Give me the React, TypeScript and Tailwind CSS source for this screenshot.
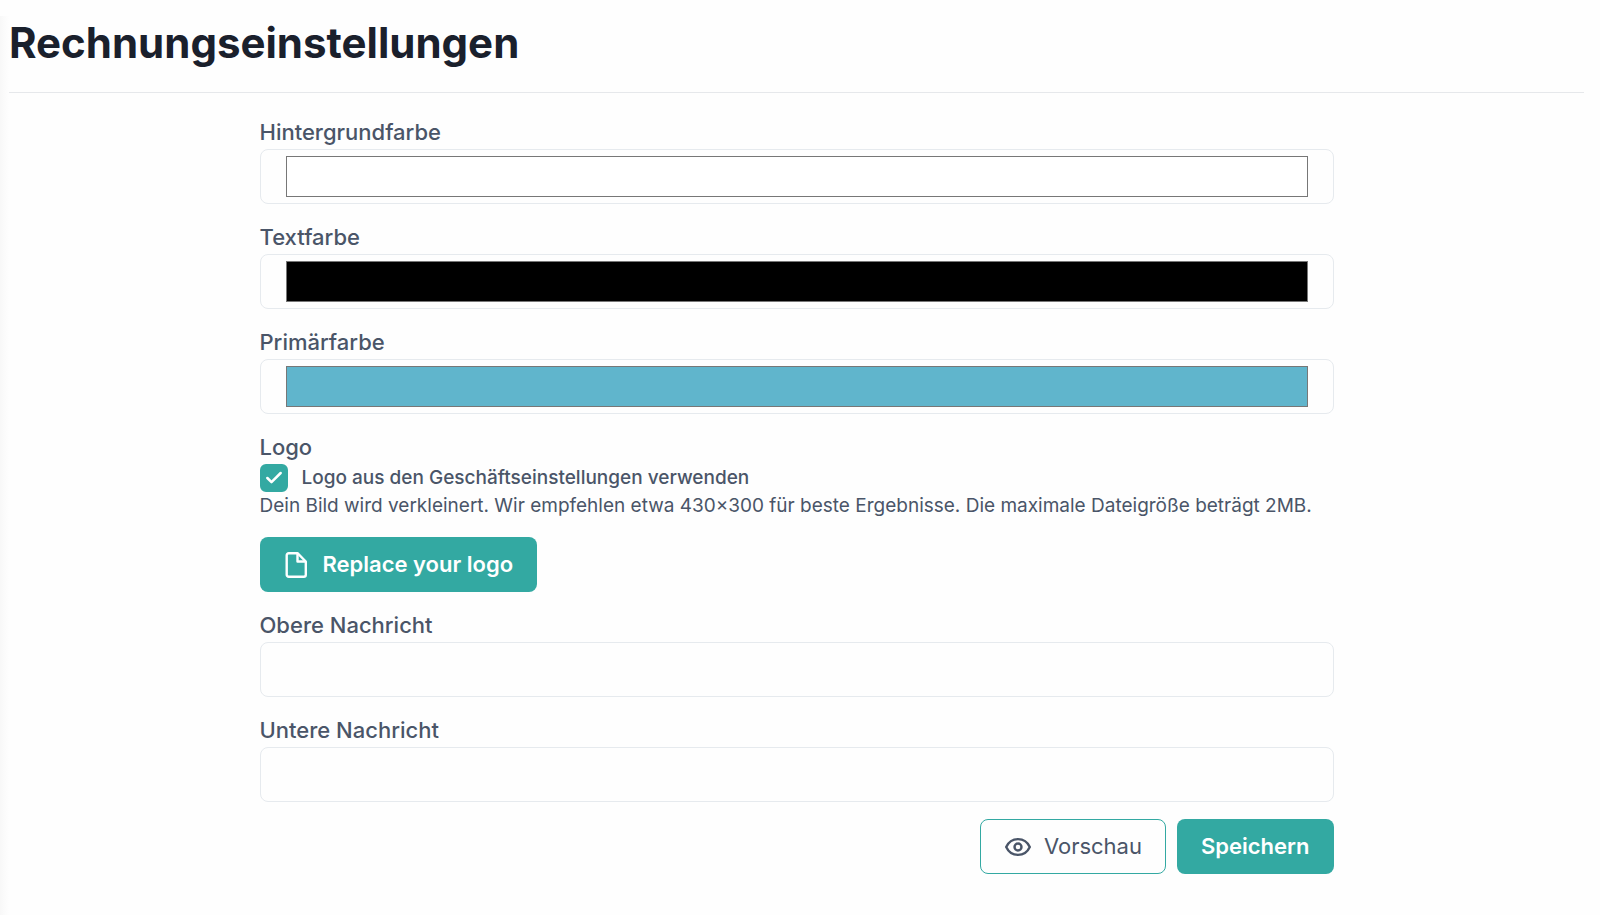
import { useState } from "react";
import { Check } from "lucide-react";

const colorFields = [
  { id: "background", label: "Hintergrundfarbe", initial: "#ffffff" },
  { id: "text", label: "Textfarbe", initial: "#000000" },
  { id: "primary", label: "Primärfarbe", initial: "#60b5cc" },
];

const messageFields = [
  { id: "top-message", label: "Obere Nachricht" },
  { id: "bottom-message", label: "Untere Nachricht" },
];

function ColorField({ id, label, initial }: { id: string; label: string; initial: string }) {
  const [value, setValue] = useState(initial);

  return (
    <div>
      <label htmlFor={id} className="block text-[22px] leading-[33px] font-medium">
        {label}
      </label>
      <input
        type="color"
        id={id}
        value={value}
        onChange={(e) => setValue(e.target.value)}
        className="block h-[55px] w-full appearance-none rounded-lg border border-[#e6eaee] bg-transparent px-[25px] py-[6px] [&::-webkit-color-swatch]:rounded-none [&::-webkit-color-swatch]:border [&::-webkit-color-swatch]:border-[#777777] [&::-webkit-color-swatch-wrapper]:p-0"
      />
    </div>
  );
}

function MessageField({ id, label }: { id: string; label: string }) {
  return (
    <div>
      <label htmlFor={id} className="block text-[22px] leading-[33px] font-medium">
        {label}
      </label>
      <input
        type="text"
        id={id}
        className="block h-[55px] w-full rounded-lg border border-[#e6eaee] bg-transparent px-6 text-[22px] outline-none focus:border-[#33a9a2]"
      />
    </div>
  );
}

function FileIcon() {
  return (
    <svg viewBox="0 0 24 28" className="h-7 w-6" fill="none" stroke="currentColor" strokeWidth="2.400" strokeLinejoin="round" aria-hidden="true">
      <path d="M4.700 2.200h8.800l8.300 8.300v13.300a2 2 0 0 1-2 2H4.700a2 2 0 0 1-2-2V4.200a2 2 0 0 1 2-2Z" />
      <path d="M13.500 2.200v8.300h8.300" />
    </svg>
  );
}

function EyeIcon() {
  return (
    <svg viewBox="0 0 28 22" className="h-[22px] w-7" fill="none" stroke="currentColor" strokeWidth="2.400" aria-hidden="true">
      <path d="M2.200 11c2.300-5 6.700-7.900 11.800-7.900s9.500 2.900 11.800 7.900c-2.300 5-6.700 7.900-11.800 7.900S4.500 16 2.200 11Z" strokeLinejoin="round" />
      <circle cx="14" cy="11" r="3.500" />
    </svg>
  );
}

export default function App() {
  const [useBusinessLogo, setUseBusinessLogo] = useState(true);

  return (
    <div className="flex min-h-screen bg-[#fefefe] font-['Inter',sans-serif] text-[#4a5568]">
      <div className="mt-4 w-[9px] shrink-0 bg-linear-to-r from-[#f8f8f8] to-[#fefefe]" />
      <main className="min-w-0 flex-1 pr-4">
        <header className="border-b border-[#e6e8eb] pt-[11px] pb-[17px]">
          <h1 className="text-[42px] leading-[64px] font-bold text-[#1a202c]">Rechnungseinstellungen</h1>
        </header>

        <form className="mx-auto mt-[23px] flex w-full max-w-[1074px] flex-col gap-[17px]" onSubmit={(e) => e.preventDefault()}>
          {colorFields.map((field) => (
            <ColorField key={field.id} {...field} />
          ))}

          <div role="group" aria-labelledby="logo-label">
            <p id="logo-label" className="text-[22px] leading-[33px] font-medium">
              Logo
            </p>
            <label className="flex h-7 w-fit items-center gap-[14px] text-[19px] font-medium">
              <span className="relative flex size-7">
                <input
                  type="checkbox"
                  checked={useBusinessLogo}
                  onChange={(e) => setUseBusinessLogo(e.target.checked)}
                  className="peer size-7 appearance-none rounded-md border-2 border-[#e2e8f0] checked:border-[#33a9a2] checked:bg-[#33a9a2]"
                />
                <Check className="pointer-events-none absolute inset-0 m-auto hidden size-5 text-white peer-checked:block" strokeWidth={3} />
              </span>
              Logo aus den Geschäftseinstellungen verwenden
            </label>
            <p className="text-[19px] leading-7">
              Dein Bild wird verkleinert. Wir empfehlen etwa 430×300 für beste Ergebnisse. Die maximale Dateigröße beträgt 2MB.
            </p>
            <button
              type="button"
              className="mt-[17px] flex h-[55px] items-center gap-[15px] rounded-lg bg-[#33a9a2] px-6 text-[22px] font-semibold text-white"
            >
              <FileIcon />
              Replace your logo
            </button>
          </div>

          {messageFields.map((field) => (
            <MessageField key={field.id} {...field} />
          ))}

          <div className="flex justify-end gap-[11px]">
            <button
              type="button"
              className="flex h-[55px] items-center gap-3 rounded-lg border border-[#33a9a2] px-[23px] text-[22px]"
            >
              <EyeIcon />
              Vorschau
            </button>
            <button type="submit" className="h-[55px] rounded-lg bg-[#33a9a2] px-6 text-[22px] font-semibold text-white">
              Speichern
            </button>
          </div>
        </form>
      </main>
    </div>
  );
}
